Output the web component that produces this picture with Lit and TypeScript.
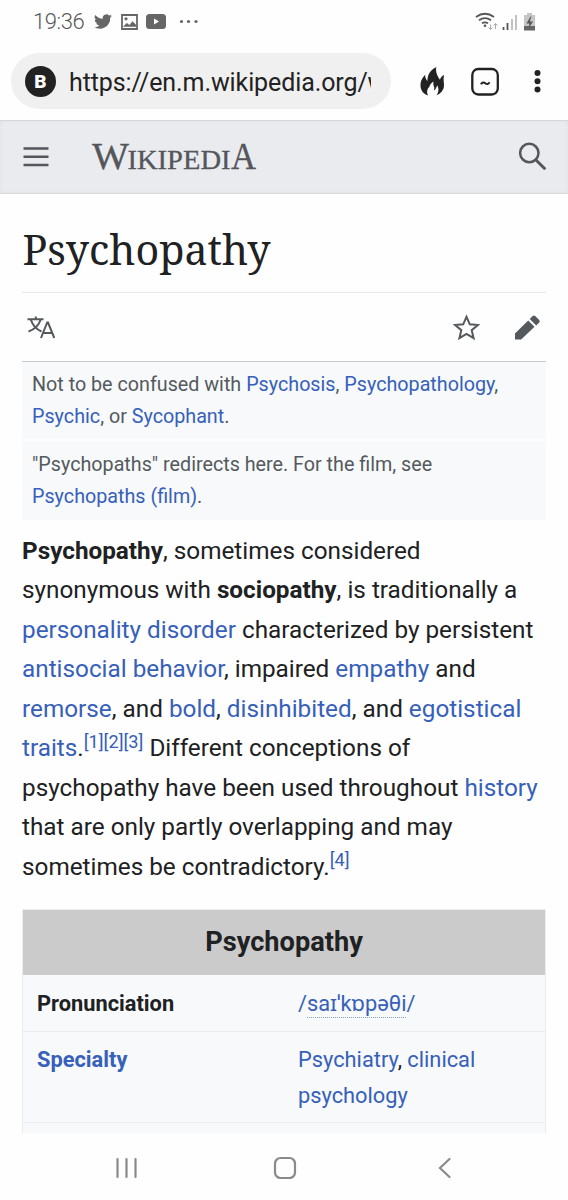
import { LitElement, html, css } from "lit";
import { customElement } from "lit/decorators.js";

@customElement("app-root")
export class AppRoot extends LitElement {
  static styles = css`
    * { box-sizing: border-box; }
    :host {
      display: flex; flex-direction: column; width: 568px; height: 1200px; overflow: hidden;
      background: #fefefe; color: #202122; font-family: Roboto, "Noto Sans", sans-serif;
    }
    svg { display: block; flex: none; overflow: visible; }
    a { color: #3660b9; text-decoration: none; }
    .status { display: flex; align-items: center; height: 43px; padding: 0 32px 0 33px; flex: none; color: #666; }
    .time { font-size: 22px; line-height: 43px; width: 61px; white-space: nowrap; letter-spacing: -0.45px; color: #585858; font-weight: 300; }
    .photo { margin-left: 9px; }
    .video { margin-left: 8px; }
    .more { margin-left: 13px; }
    .grow { flex: 1; }
    .bar { display: flex; align-items: center; height: 77px; padding: 0 0 1px 11px; flex: none; }
    .pill { display: flex; align-items: center; width: 380px; height: 56px; border-radius: 28px; background: #f0f0f0; padding-left: 14px; }
    .badge { width: 31px; height: 31px; flex: none; border-radius: 50%; background: #222; color: #fff; font-weight: 900; font-size: 19px; line-height: 31px; text-align: center; }
    .url { margin-left: 13px; width: 302px; overflow: hidden; white-space: nowrap; font-size: 25px; letter-spacing: -0.1px; line-height: 40px; padding-top: 3px; color: #222; }
    .head { display: flex; align-items: center; height: 74px; flex: none; background: #eaebef; border-top: 1px solid #d6d7d9; border-bottom: 1px solid #d9dadd; box-shadow: inset 0 0 3px #dcdde1; }
    .page { flex: 1; min-height: 0; overflow: hidden; padding: 0 22px; }
    .title { height: 99px; border-bottom: 1px solid #e6e8ea; }
    .actions { display: flex; align-items: center; height: 69px; border-bottom: 1px solid #c8ccd1; }
    .note { height: 77px; padding: 7px 10px; background: #f7f9fb; color: #54595d; font-size: 19.73px; line-height: 32.2px; white-space: nowrap; }
    .note + .note { margin-top: 2px; height: 79px; padding-top: 8px; }
    .para { margin: 11px 0 0; height: 378px; font-size: 24.3px; line-height: 39.45px; white-space: nowrap; }
    .line { display: block; height: 39.45px; }
    sup { font-size: 18.2px; line-height: 1; vertical-align: baseline; position: relative; top: -8.5px; }
    .box { border: 1px solid #eaecf0; border-bottom: 0; background: #f8f9fb; font-size: 21.8px; line-height: 36px; height: 260px; }
    .cap { height: 65px; background: #cbcbcb; text-align: center; font-weight: 700; font-size: 27.2px; line-height: 64px; }
    .row { display: grid; grid-template-columns: 261px 1fr; padding: 11px 14px 0; height: 57px; border-bottom: 1px solid #eaecf0; white-space: nowrap; }
    .tall { height: 91px; padding-top: 10px; }
    .key { font-weight: 700; }
    .ipa { border-bottom: 1px dotted #8aa0cc; padding-bottom: 1px; }
    .nav { display: flex; height: 67px; flex: none; background: #fefefe; }
  `;

  render() {
    return html`
      <div class="status">
        <span class="time">19:36</span>
        <svg width="18" height="16" viewBox="1 2 22 20" preserveAspectRatio="none" fill="#666"><path d="M23 4.500a9 9 0 0 1-2.600.8 4.500 4.500 0 0 0 2-2.500 9 9 0 0 1-2.900 1.100 4.500 4.500 0 0 0-7.700 4.100A12.800 12.800 0 0 1 2.500 3.300a4.500 4.500 0 0 0 1.400 6 4.500 4.500 0 0 1-2-.5 4.500 4.500 0 0 0 3.600 4.500 4.500 4.500 0 0 1-2 .1 4.500 4.500 0 0 0 4.200 3.100A9 9 0 0 1 1 18.400 12.800 12.800 0 0 0 20.700 7 9 9 0 0 0 23 4.500z"/></svg>
        <svg class="photo" width="17" height="16" viewBox="0 0 17 16"><path d="M1 1h15v14H1z" fill="none" stroke="#666" stroke-width="1.800"/><path d="M2 12.800l3.800-3.800 2.700 2L11.500 7.200l3.500 3.500v2.100z" fill="#666"/><circle cx="5" cy="4.800" r="1.600" fill="#666"/></svg>
        <svg class="video" width="20" height="15" viewBox="0 0 20 15"><rect width="20" height="15" rx="3.500" fill="#666"/><path d="M8 4.500v6l5-3z" fill="#fff"/></svg>
        <svg class="more" width="20" height="4" viewBox="0 0 20 4" fill="#666"><circle cx="2.500" cy="1.500" r="1.600"/><circle cx="9.500" cy="1.500" r="1.600"/><circle cx="17" cy="1.500" r="1.600"/></svg>
        <span class="grow"></span>
        <svg width="60" height="20" viewBox="476 11 60 20">
          <g fill="none" stroke="#555" stroke-width="1.800"><path d="M476 16q9-6.500 18 0"/><path d="M479 19.300q6-4.500 12 0"/><path d="M482 22.300q3-2 6 0"/></g>
          <circle cx="485" cy="24.800" r="1.300" fill="#555"/>
          <path d="M490.500 23.500v5m-2-2l2 2 2-2M495.500 28v-5.500m-2 2l2-2 2 2" fill="none" stroke="#aaa"/>
          <path d="M503.500 29v-3M507.500 29v-7" stroke="#555" stroke-width="1.800"/><path d="M512 29V18M516 29V14" stroke="#bbb" stroke-width="1.800"/>
          <path d="M524 14h3v-2h5v2h3v15h-11z" fill="#c5c5c5"/><path d="M524 25h11v4.500h-11z" fill="#666"/><path d="M530.500 15.500l-4 7h3l-1 5 4.500-7h-3.200l1.500-5z" fill="#555"/>
        </svg>
      </div>
      <div class="bar">
        <div class="pill"><span class="badge">B</span><span class="url">https://en.m.wikipedia.org/w</span></div>
        <svg width="177" height="76" viewBox="391 43 177 76">
          <path d="M436.300 67C430.500 70 427.300 74.500 427.500 81 426 79.500 425 77.500 425.200 74.800 421.500 78.500 420.300 82 420.500 86 420.800 90.500 423.500 94 428 95.500 426.300 92 427 89 429.500 86.500 430 84.500 431.500 82.500 433.500 81.500 433 84 433.500 85.500 434.300 87.500L434 90.500C435.800 89 436.800 87.300 437 85.200 439 88 439 92 436.500 95.300 441 93.500 443.800 90 444 85.500 444.100 82 443 79.500 444 75 441.800 76 440.500 77.500 440 79.800 437.500 76 435.300 72.500 436.300 67z" fill="#222"/>
          <rect x="472.300" y="69" width="25.500" height="25.500" rx="6" fill="none" stroke="#222" stroke-width="2.300"/>
          <path d="M480.800 84.300q2.200-3 4.500-1t4.300-1" fill="none" stroke="#222" stroke-width="1.900"/>
          <g fill="#222"><circle cx="537.500" cy="73" r="3"/><circle cx="537.500" cy="81.300" r="3"/><circle cx="537.500" cy="89.600" r="3"/></g>
        </svg>
      </div>
      <div class="head">
        <svg width="568" height="72" viewBox="0 121 568 72">
          <path d="M23.500 148.500h25M23.500 156.700h25M23.500 165h25" stroke="#54565b" stroke-width="2.600"/>
          <g font-family="'Liberation Serif', serif" fill="#54565b" stroke="#54565b" stroke-width=".3">
            <text x="92" y="169" font-size="37" textLength="37" lengthAdjust="spacingAndGlyphs">W</text>
            <text x="127.500" y="169" font-size="27" textLength="103" lengthAdjust="spacingAndGlyphs">IKIPEDI</text>
            <text x="231" y="169" font-size="37" textLength="25" lengthAdjust="spacingAndGlyphs">A</text>
          </g>
          <circle cx="529.300" cy="153" r="9.200" fill="none" stroke="#54565b" stroke-width="2.500"/><path d="M535.500 159.500l9.800 9.800" stroke="#54565b" stroke-width="3"/>
        </svg>
      </div>
      <div class="page">
        <div class="title">
          <svg width="524" height="98" viewBox="22 194 524 98"><text x="22.500" y="264.500" font-family="'Noto Serif','DejaVu Serif Condensed','DejaVu Serif',serif" font-size="41" fill="#202122" textLength="248" lengthAdjust="spacingAndGlyphs">Psychopathy</text></svg>
        </div>
        <div class="actions">
          <svg width="524" height="68" viewBox="22 293 524 68">
            <g fill="none" stroke="#54595d" stroke-width="2"><path d="M27.500 319.300h16M35.800 316.500v3M31 320q2.500 8 10.500 11.500M40.500 320q-2.500 8-12 11.500"/><path d="M41 338l6.200-15.500h.8L54.300 338M43.300 333h8.700"/></g>
            <path d="M466.500 316.800l3.300 7.500 8.100.7-6.200 5.200 1.900 8-7.100-4.200-7.100 4.200 1.900-8-6.200-5.200 8.100-.7z" fill="none" stroke="#54595d" stroke-width="2"/>
            <path d="M515 333.500v6h6.200l13.300-12.800-6.300-6.300zM529.700 319l3-3q1.200-1.200 2.500 0l4 4q1.200 1.200 0 2.500l-3 3z" fill="#54595d"/>
          </svg>
        </div>
        <div class="note">Not to be confused with <a>Psychosis</a>, <a>Psychopathology</a>,<br><a>Psychic</a>, or <a>Sycophant</a>.</div>
        <div class="note">"Psychopaths" redirects here. For the film, see<br><a>Psychopaths (film)</a>.</div>
        <p class="para">
          <span class="line"><b>Psychopathy</b>, sometimes considered</span>
          <span class="line">synonymous with <b>sociopathy</b>, is traditionally a</span>
          <span class="line"><a>personality disorder</a> characterized by persistent</span>
          <span class="line"><a>antisocial behavior</a>, impaired <a>empathy</a> and</span>
          <span class="line"><a>remorse</a>, and <a>bold</a>, <a>disinhibited</a>, and <a>egotistical</a></span>
          <span class="line"><a>traits</a>.<sup><a>[1][2][3]</a></sup> Different conceptions of</span>
          <span class="line">psychopathy have been used throughout <a>history</a></span>
          <span class="line">that are only partly overlapping and may</span>
          <span class="line">sometimes be contradictory.<sup><a>[4]</a></sup></span>
        </p>
        <div class="box">
          <div class="cap">Psychopathy</div>
          <div class="row"><span class="key">Pronunciation</span><span><a>/<span class="ipa">saɪˈkɒpəθi</span>/</a></span></div>
          <div class="row tall"><a class="key">Specialty</a><span><a>Psychiatry</a>, <a>clinical<br>psychology</a></span></div>
        </div>
      </div>
      <div class="nav">
        <svg width="568" height="67" viewBox="0 1133 568 67" fill="none" stroke="#8a8a8a" stroke-width="2.200" stroke-linecap="round">
          <path d="M117.500 1159v18M126.500 1159v18M135.500 1159v18"/>
          <rect x="275" y="1158" width="20" height="20" rx="5.500"/>
          <path d="M449.500 1159l-9.500 9 9.500 9"/>
        </svg>
      </div>
    `;
  }
}
